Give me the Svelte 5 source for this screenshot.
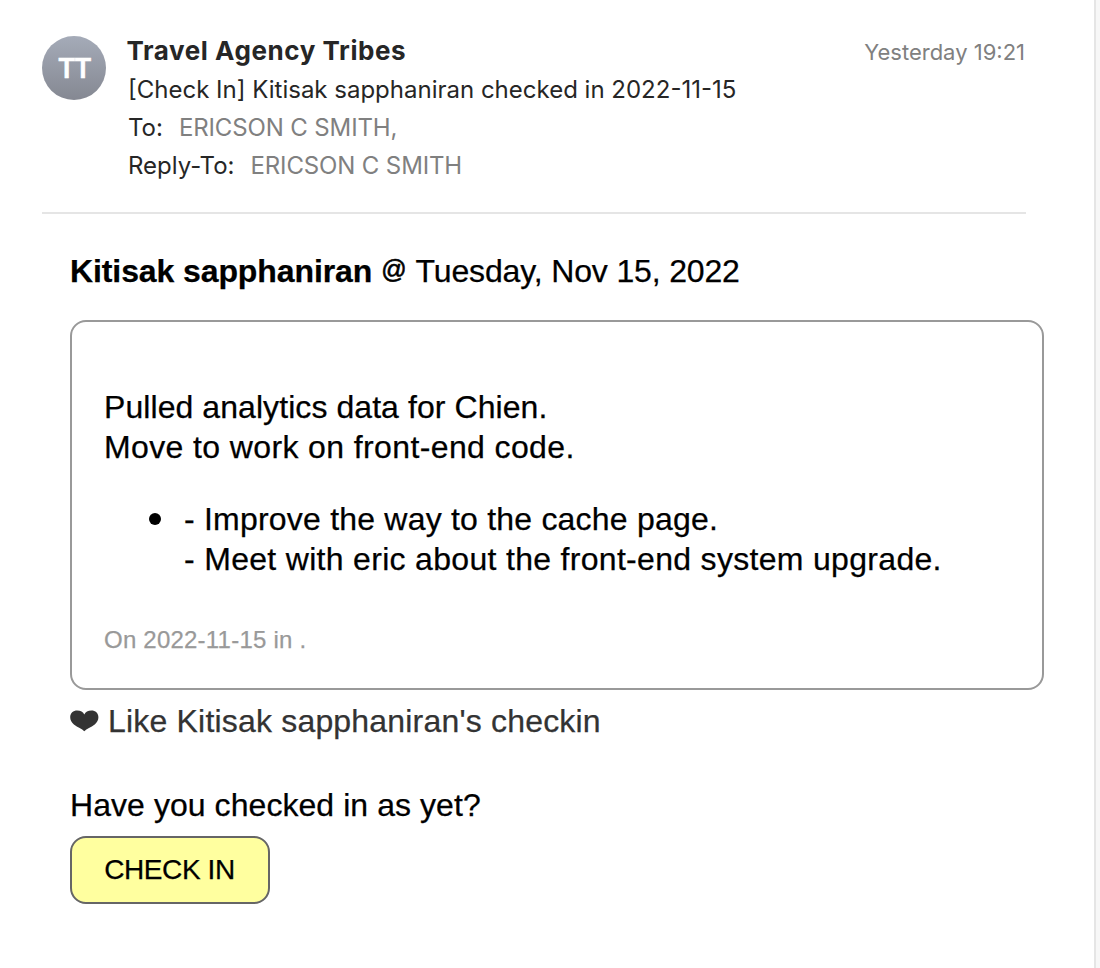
<script>
  const sender = { initials: 'TT', name: 'Travel Agency Tribes' };
  const person = 'Kitisak sapphaniran';
  const tasks = ['- Improve the way to the cache page.', '- Meet with eric about the front-end system upgrade.'];
</script>

<main class="message">
  <header>
    <div class="avatar"><span>{sender.initials}</span></div>
    <div class="meta">
      <div class="top">
        <strong class="name">{sender.name}</strong>
        <time>Yesterday 19:21</time>
      </div>
      <div class="subject">[Check In] {person} checked in 2022-11-15</div>
      <div class="line"><span class="key">To:</span><span class="value">ERICSON C SMITH,</span></div>
      <div class="line"><span class="key">Reply-To:</span><span class="value">ERICSON C SMITH</span></div>
    </div>
  </header>

  <section class="body">
    <h1><b>{person}</b><span class="at">@</span><span class="date">Tuesday, Nov 15, 2022</span></h1>
    <article>
      <p><span class="t1">Pulled analytics data for Chien.</span><br /><span class="t2">Move to work on front-end code.</span></p>
      <div class="item">
        <i class="dot"></i>
        <div><span class="t3">{tasks[0]}</span><br /><span class="t4">{tasks[1]}</span></div>
      </div>
      <small>On 2022-11-15 in .</small>
    </article>
    <div class="like">
      <svg width="29" height="22" viewBox="0 0 29 22" aria-hidden="true">
        <path d="M14.3 21.2C12 18.6 7.6 17.4 3.9 14.4C1.4 12.4 0.2 10 0.2 7.3C0.2 3.3 3.2 0.6 7.2 0.6C10.6 0.6 13.2 2 14.3 4.4C15.4 2 18 0.6 21.4 0.6C25.4 0.6 28.4 3.3 28.4 7.3C28.4 10 27.2 12.4 24.7 14.4C21 17.4 16.6 18.6 14.3 21.2Z" fill="#333" />
      </svg>
      <span>Like {person}'s checkin</span>
    </div>
    <p class="ask">Have you checked in as yet?</p>
    <button>CHECK IN</button>
  </section>
</main>

<style>
  :global(body) {
    margin: 0;
    background: #f7f7f7;
  }
  .message {
    box-sizing: border-box;
    width: 1096px;
    height: 968px;
    border-right: 2px solid #e5e5e5;
    background: #fff;
    padding-top: 36px;
    overflow: hidden;
    font-family: "Liberation Sans", Arial, sans-serif;
    font-size: 32px;
    line-height: 40px;
    color: #000;
    white-space: nowrap;
  }
  header {
    box-sizing: border-box;
    display: flex;
    gap: 22px;
    width: 984px;
    height: 178px;
    margin-left: 42px;
    border-bottom: 2px solid #e5e5e5;
    font-family: Inter, sans-serif;
    color: #262626;
  }
  .avatar {
    box-sizing: border-box;
    flex: none;
    display: grid;
    place-items: center;
    width: 64px;
    height: 64px;
    padding-top: 2px;
    border-radius: 50%;
    background: linear-gradient(#a5abb8, #858892);
    color: #fff;
    font-size: 27px;
    font-weight: 600;
    letter-spacing: -1.6px;
    -webkit-text-stroke: 0.6px #fff;
  }
  .meta {
    flex: 1;
    font-size: 24px;
    line-height: 38px;
  }
  .top {
    display: flex;
    justify-content: space-between;
    height: 35px;
    line-height: 29px;
  }
  .name {
    margin-left: -1.5px;
    font-size: 26px;
    font-weight: 700;
    letter-spacing: 0.57px;
  }
  time {
    margin-right: 1px;
    font-size: 22px;
    line-height: 33px;
    color: #808080;
  }
  .line {
    display: flex;
    gap: 16px;
  }
  .value {
    color: #808080;
    letter-spacing: -0.13px;
  }
  .body {
    padding: 37px 0 0 70px;
    -webkit-text-stroke: 0.25px;
  }
  h1 {
    margin: 0;
    height: 40px;
    font-size: 32px;
    font-weight: 400;
  }
  h1 b {
    letter-spacing: -0.1px;
  }
  .at {
    display: inline-block;
    margin: 0 9px 0 9px;
    font-size: 25px;
    line-height: 26px;
    vertical-align: 4px;
    -webkit-text-stroke: 0.6px;
  }
  .date {
    letter-spacing: -0.15px;
  }
  article {
    box-sizing: border-box;
    width: 974px;
    height: 370px;
    margin-top: 29px;
    padding: 65px 32px 0;
    border: 2px solid #999;
    border-radius: 16px;
  }
  p {
    margin: 0;
  }
  .t1 {
    letter-spacing: 0.07px;
  }
  .t2 {
    letter-spacing: 0.38px;
  }
  .t3 {
    letter-spacing: 0.21px;
  }
  .t4 {
    letter-spacing: 0.31px;
  }
  .item {
    display: flex;
    align-items: flex-start;
    margin: 32px 0 41px 45px;
  }
  .dot {
    flex: none;
    width: 12px;
    height: 12px;
    margin: 14px 23px 0 0;
    border-radius: 50%;
    background: #000;
  }
  small {
    display: block;
    font-size: 24px;
    letter-spacing: 0.22px;
    color: #999;
  }
  .like {
    display: flex;
    align-items: center;
    gap: 9px;
    margin-top: 11px;
    letter-spacing: 0.19px;
    color: #333;
  }
  .ask {
    margin-top: 44px;
    letter-spacing: 0.06px;
  }
  button {
    display: block;
    width: 200px;
    height: 68px;
    margin-top: 11px;
    padding: 0 1px 0 0;
    border: 2px solid #666;
    border-radius: 16px;
    background: #ffff9f;
    color: #000;
    font: 28px/64px "Liberation Sans", Arial, sans-serif;
    letter-spacing: -0.4px;
    -webkit-text-stroke: 0.25px;
  }
</style>
